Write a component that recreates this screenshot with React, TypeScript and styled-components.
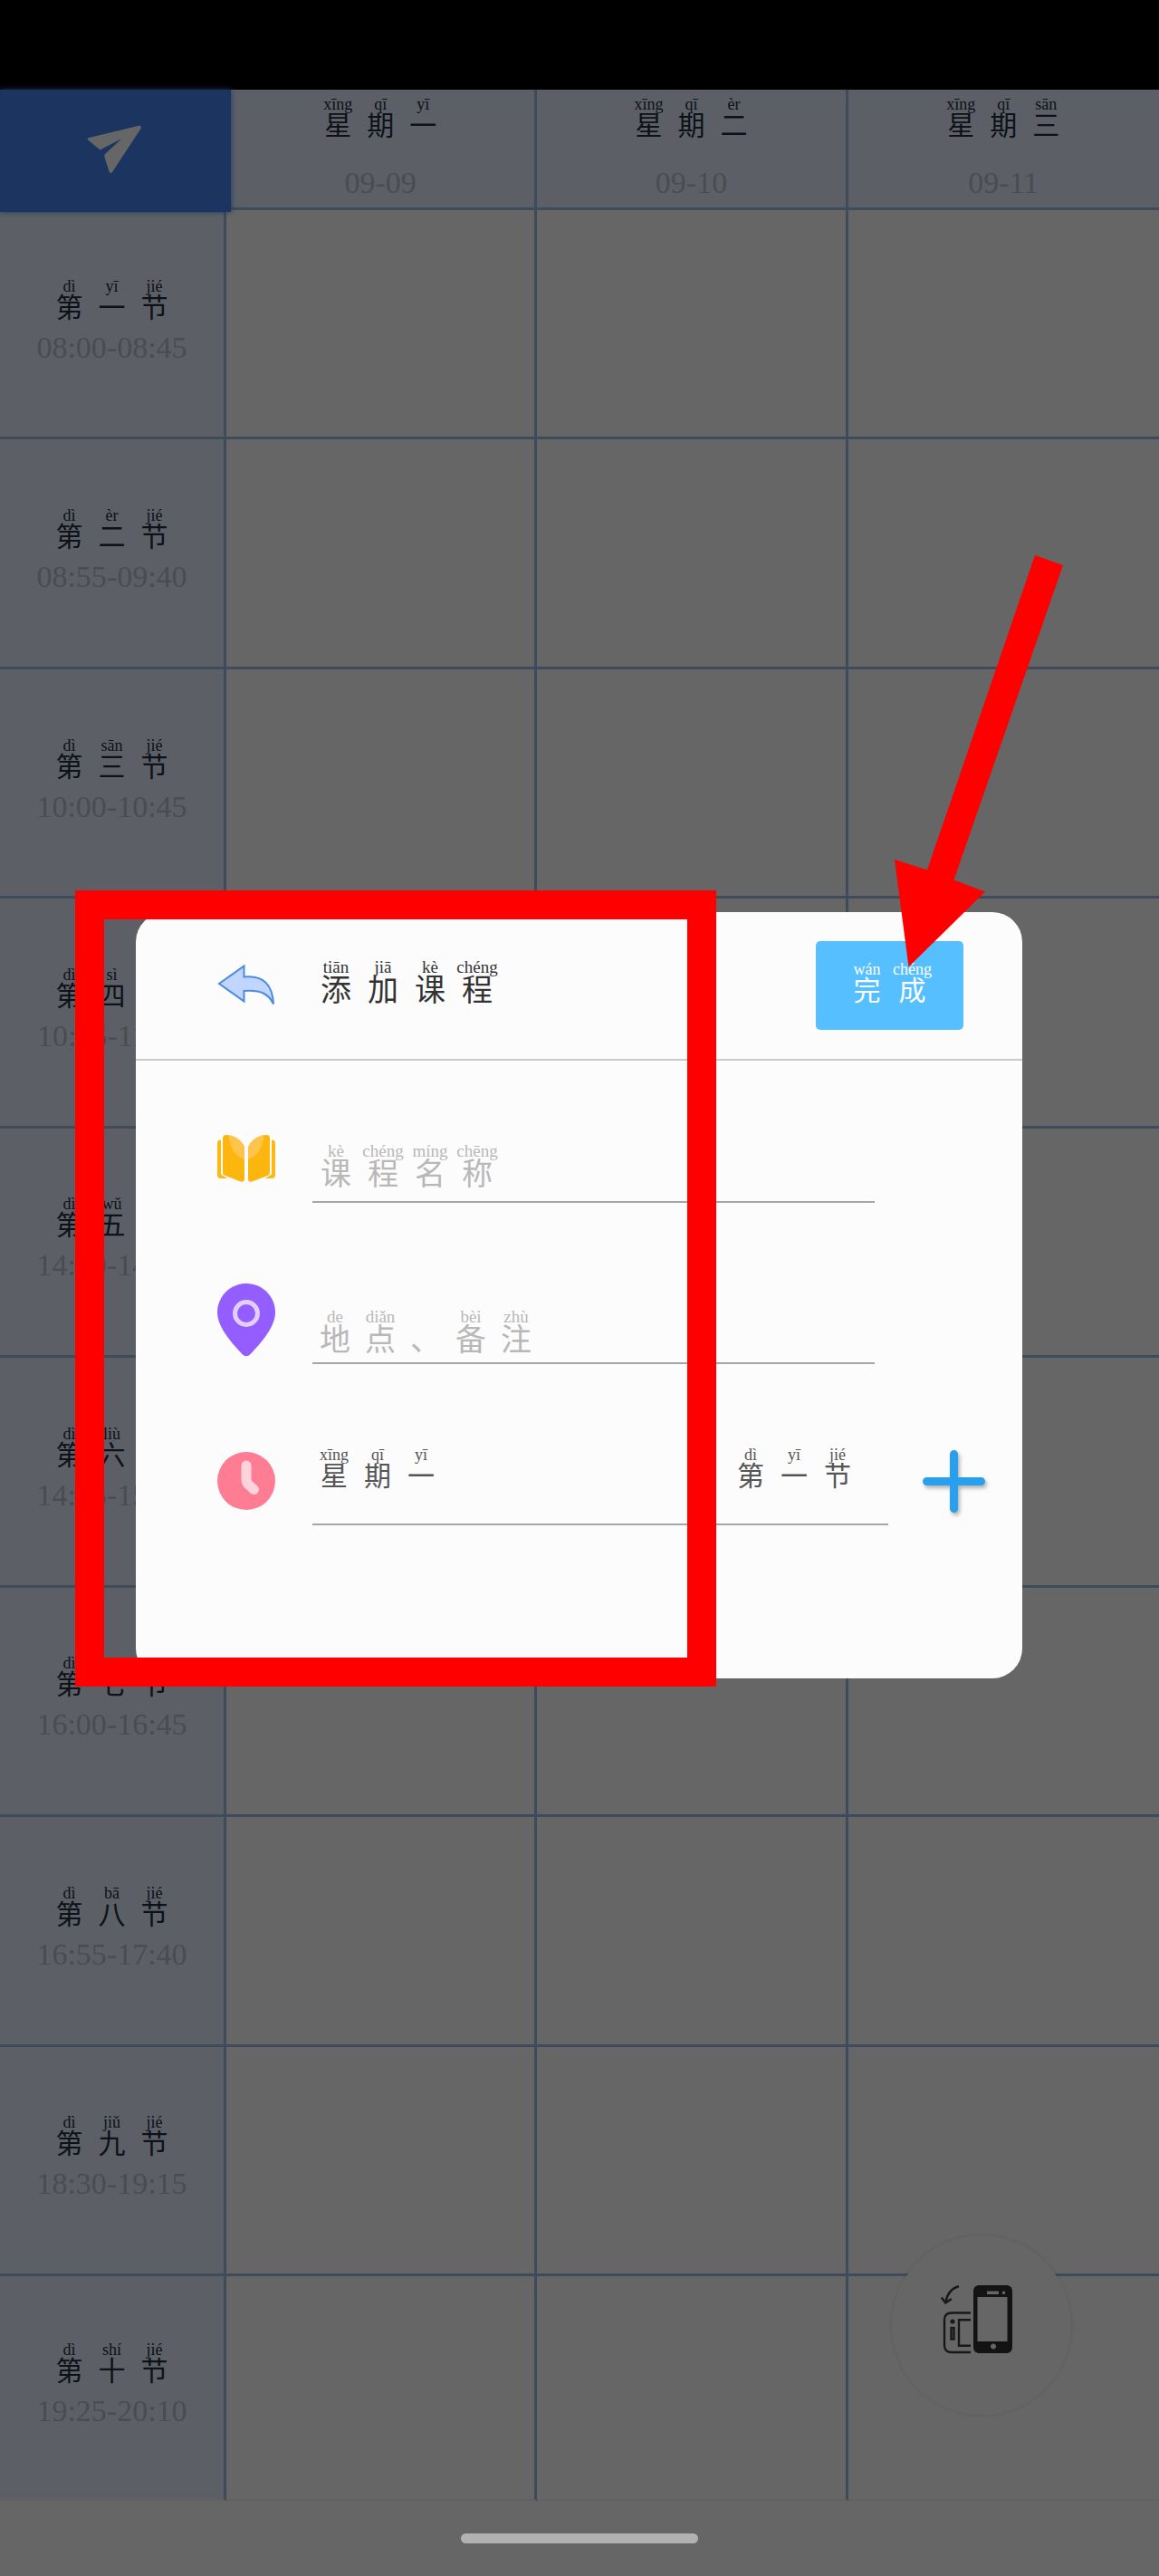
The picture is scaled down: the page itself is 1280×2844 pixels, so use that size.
import React from "react";
import styled, { createGlobalStyle } from "styled-components";

type Syllable = [hanzi: string, pinyin: string];

const GlobalStyle = createGlobalStyle`
  *, *::before, *::after { box-sizing: border-box; }
  body {
    margin: 0;
    background: #ffffff;
    font-family: "Liberation Serif", "Noto Sans CJK SC", serif;
  }
  button, input { font: inherit; color: inherit; }
`;

const Screen = styled.div`
  position: relative;
  display: flex;
  flex-direction: column;
  min-height: 100vh;
`;

const StatusBar = styled.div`
  flex: none;
  height: 99px;
  background: #000000;
`;

/* ---------- annotated Chinese text ---------- */

const Phrase = styled.span<{ $cell: number; $size: number; $note: number; $color: string }>`
  display: inline-flex;
  color: ${(p) => p.$color};

  ruby {
    display: flex;
    flex-direction: column-reverse;
    align-items: center;
    width: ${(p) => p.$cell}px;
    font-size: ${(p) => p.$size}px;
    font-weight: 400;
    line-height: ${(p) => p.$size}px;
    white-space: nowrap;
  }

  rt {
    display: block;
    height: ${(p) => p.$note}px;
    font-size: ${(p) => p.$note}px;
    font-weight: 400;
    line-height: ${(p) => p.$note}px;
  }
`;

function Pinyin({
  text,
  cell = 47,
  size = 30,
  note = 18,
  color = "#555555",
}: {
  text: Syllable[];
  cell?: number;
  size?: number;
  note?: number;
  color?: string;
}) {
  return (
    <Phrase $cell={cell} $size={size} $note={note} $color={color}>
      {text.map(([hanzi, pinyin], i) => (
        <ruby key={i}>
          {hanzi}
          <rt>{pinyin}</rt>
        </ruby>
      ))}
    </Phrase>
  );
}

/* ---------- timetable ---------- */

const line = "3px solid #98bbe1";

const Timetable = styled.table`
  flex: 1;
  display: grid;
  grid-template-columns: 250px repeat(3, 1fr);
  grid-template-rows: 133px repeat(9, 1fr) 248px;

  thead, tbody, tr { display: contents; }
  tbody tr:last-child > * { border-bottom: 2px solid #f2f2f2; }
`;

const Corner = styled.td`
  z-index: 1;
  margin: 0 -5px -2px 0;
  padding: 0;
  background: #4485f0;
  box-shadow: 0 0 6px #4485f0;
`;

const SendButton = styled.button`
  display: flex;
  align-items: center;
  justify-content: center;
  width: 100%;
  height: 100%;
  padding: 0 4px 4px 0;
  border: 0;
  background: none;
`;

const DayHead = styled.th`
  display: flex;
  flex-direction: column;
  align-items: center;
  gap: 28px;
  padding: 7px 0 0;
  border-right: ${line};
  border-bottom: ${line};
  background: #e6f0ff;
  &:last-child { border-right: 0; }
`;

const PeriodHead = styled.th`
  display: flex;
  flex-direction: column;
  align-items: center;
  justify-content: center;
  gap: 9px;
  padding: 0 0 4px;
  border-right: ${line};
  border-bottom: ${line};
  background: #e6f0ff;
`;

const Slot = styled.td`
  padding: 0;
  border-right: ${line};
  border-bottom: ${line};
  &:last-child { border-right: 0; }
`;

const Numbers = styled.span`
  color: #b6bdcb;
  font-size: 34px;
  font-weight: 400;
  line-height: 40px;
`;

const week: Syllable[] = [["星", "xīng"], ["期", "qī"]];
const days: { name: Syllable; date: string }[] = [
  { name: ["一", "yī"], date: "09-09" },
  { name: ["二", "èr"], date: "09-10" },
  { name: ["三", "sān"], date: "09-11" },
];

const periods: { name: Syllable; time: string }[] = [
  { name: ["一", "yī"], time: "08:00-08:45" },
  { name: ["二", "èr"], time: "08:55-09:40" },
  { name: ["三", "sān"], time: "10:00-10:45" },
  { name: ["四", "sì"], time: "10:55-11:40" },
  { name: ["五", "wǔ"], time: "14:00-14:45" },
  { name: ["六", "liù"], time: "14:55-15:40" },
  { name: ["七", "qī"], time: "16:00-16:45" },
  { name: ["八", "bā"], time: "16:55-17:40" },
  { name: ["九", "jiǔ"], time: "18:30-19:15" },
  { name: ["十", "shí"], time: "19:25-20:10" },
];

const period = (name: Syllable): Syllable[] => [["第", "dì"], name, ["节", "jié"]];

/* ---------- bottom area ---------- */

const Footer = styled.footer`
  flex: none;
  display: flex;
  justify-content: center;
  height: 83px;
  padding-top: 36px;
`;

const HomeIndicator = styled.div`
  z-index: 3;
  width: 262px;
  height: 11px;
  border-radius: 6px;
  background: #b2b2b2;
`;

const RotateButton = styled.button`
  position: absolute;
  right: 97px;
  bottom: 178px;
  z-index: 1;
  display: flex;
  align-items: center;
  justify-content: center;
  width: 198px;
  height: 198px;
  padding: 0 10px 12px 0;
  border: 0;
  border-radius: 50%;
  background: #ffffff;
  box-shadow: 0 0 5px rgba(0, 0, 0, 0.12);
`;

/* ---------- dialog ---------- */

const Backdrop = styled.div`
  position: absolute;
  inset: 0;
  z-index: 2;
  display: flex;
  align-items: center;
  padding: 99px 151px 83px 150px;
  background: rgba(0, 0, 0, 0.6);
`;

const Dialog = styled.section`
  flex: 1;
  border-radius: 33px;
  background: #fcfcfc;
`;

const DialogHeader = styled.header`
  display: flex;
  align-items: center;
  padding: 32px 65px 32px 90px;
  border-bottom: 2px solid #cacaca;
`;

const IconButton = styled.button`
  flex: none;
  display: flex;
  padding: 0;
  border: 0;
  background: none;
`;

const Title = styled.h1`
  flex: 1;
  display: flex;
  margin: 0;
  padding: 0 0 8px 41px;
`;

const DoneButton = styled.button`
  display: flex;
  align-items: center;
  justify-content: center;
  width: 163px;
  height: 98px;
  padding: 0 0 6px;
  border: 0;
  border-radius: 5px;
  background: #56bfff;
`;

const Form = styled.form`
  padding: 19px 0 129px;
`;

const FormRow = styled.div`
  display: flex;
  align-items: center;
  gap: 41px;
  height: 178px;
  padding: 0 41px 0 90px;

  > svg { flex: none; }
`;

const Field = styled.div<{ $lift: number }>`
  flex: 1;
  display: grid;
  align-items: end;
  height: 98px;
  margin-right: 122px;
  border-bottom: 2px solid #a6a6a6;

  > * { grid-area: 1 / 1; }
  label { padding-bottom: ${(p) => p.$lift}px; }
  input {
    width: 100%;
    height: 96px;
    padding: 0;
    border: 0;
    outline: 0;
    background: none;
    font-size: 30px;
  }
`;

const TimeField = styled.div`
  flex: 1;
  display: flex;
  align-items: flex-end;
  justify-content: space-between;
  height: 98px;
  margin-right: -3px;
  padding: 0 32px 37px 0;
  border-bottom: 2px solid #a6a6a6;
`;

const PickerButton = styled.button`
  display: flex;
  padding: 0;
  border: 0;
  background: none;
`;

/* ---------- guide marks ---------- */

const GuideFrame = styled.div`
  position: absolute;
  top: 983px;
  left: 83px;
  z-index: 4;
  width: 708px;
  height: 879px;
  border: 32px solid #ff0000;
  pointer-events: none;
`;

const GuideArrow = styled.svg`
  position: absolute;
  top: 613px;
  left: 988px;
  z-index: 4;
  pointer-events: none;
`;

/* ---------- icons ---------- */

const PlaneIcon = () => (
  <svg width="60" height="54" viewBox="0 0 60 54" aria-hidden="true">
    <path
      d="M57.5 0.8 1.6 14.2c-1 .3-1.2 1.4-.4 2.2L14.5 27.4 38.5 15 19.5 32.5v3.2l5.3 16.2c.6 1.4 2.2 1.4 3.2.2L59.3 4.2C60.400 2.200 59.600.4 57.500.8z"
      fill="#ffffff"
    />
  </svg>
);

const BackIcon = () => (
  <svg width="64" height="48" viewBox="0 0 64 48" aria-hidden="true">
    <path
      d="M29.500 2.500v12C51 12.500 61 23 62 44.500 57 34 49 28.500 29.500 30v11.500L2 22z"
      fill="#c0d5ff"
      stroke="#4a8ce0"
      strokeWidth="2"
      strokeLinejoin="miter"
    />
  </svg>
);

const BookHalf = () => (
  <>
    <path d="M4 5.500C1.500 5.500 0 6.500 0 9v35.500C0 47 1.500 48 4 48h7L4 43.500z" fill="#fdb813" />
    <path
      d="M10.500 0C7.500 0 6 1 6 3.500V41c0 2 .6 3 2.500 4L25 51.200c3 1 5 .3 5-2.700V13.500C27 6.500 20 1 10.500 0z"
      fill="#fdb60d"
    />
    <path d="M12.500.3C13.500 13 19 23 30 27V13.500C27 6.500 20 1 12.500.3z" fill="#fec44c" />
  </>
);

const BookIcon = () => (
  <svg width="64" height="52" viewBox="0 0 64 52" aria-hidden="true">
    <BookHalf />
    <g transform="translate(64 0) scale(-1 1)">
      <BookHalf />
    </g>
  </svg>
);

const PinIcon = () => (
  <svg width="64" height="80" viewBox="0 0 64 80" aria-hidden="true">
    <path
      d="M32 0C14.300 0 0 14.300 0 32c0 14 12 30 28 46.500 2.500 2.300 5.500 2.300 8 0C52 62 64 46 64 32 64 14.300 49.700 0 32 0z"
      fill="#945dff"
    />
    <circle cx="32" cy="33" r="12.500" fill="none" stroke="#e2cfff" strokeWidth="5" />
  </svg>
);

const ClockIcon = () => (
  <svg width="64" height="64" viewBox="0 0 64 64" aria-hidden="true">
    <circle cx="32" cy="32" r="32" fill="#ff7d93" />
    <path
      d="M32 15v16c0 2 .5 3 2 4.500l6.500 6"
      fill="none"
      stroke="#ffd3dc"
      strokeWidth="11"
      strokeLinecap="round"
      strokeLinejoin="round"
    />
  </svg>
);

const PlusDrawing = styled.svg`
  display: block;
  overflow: visible;
  filter: drop-shadow(2px 3px 2px rgba(0, 0, 0, 0.3));
`;

const PlusIcon = () => (
  <PlusDrawing width="69" height="69" viewBox="0 0 69 69" aria-hidden="true">
    <path d="M34.500 4.500v60M4.500 34.500h60" stroke="#28a0ee" strokeWidth="9" strokeLinecap="round" />
  </PlusDrawing>
);

const RotateIcon = () => (
  <svg width="80" height="76" viewBox="0 0 80 76" aria-hidden="true">
    <g fill="none" stroke="#3c3c3c" strokeWidth="2.400">
      <path d="M20 1C12 3.500 6.500 10 5.500 19M.8 13.500l4.500 6 6.500-4.500" />
      <path d="M33 30.500H12c-5.500 0-8 3-8 8v28c0 5 3 7.500 8 7.500h21" />
      <path d="M33 38.300H20v28.500h13" />
      <rect x="11.500" y="47" width="3" height="12.500" />
    </g>
    <circle cx="13" cy="40" r="2.600" fill="#3c3c3c" />
    <path
      fill="#303030"
      fillRule="evenodd"
      d="M43 0h29c4.500 0 7 2.500 7 7v61c0 4.500-2.500 7-7 7H43c-4.500 0-7-2.500-7-7V7c0-4.500 2.500-7 7-7zM40.500 13v49h33V13zM51 6.500v3.500h13V6.500zM58 64.500a3 3 0 1 0 .01 0zM69.500 6.500a1.800 1.800 0 1 0 .01 0z"
    />
  </svg>
);

/* ---------- page ---------- */

export default function App() {
  return (
    <Screen>
      <GlobalStyle />
      <StatusBar />

      <Timetable>
        <thead>
          <tr>
            <Corner>
              <SendButton type="button" aria-label="分享课程表">
                <PlaneIcon />
              </SendButton>
            </Corner>
            {days.map((day) => (
              <DayHead key={day.date} scope="col">
                <Pinyin text={[...week, day.name]} color="#222c3c" />
                <Numbers>{day.date}</Numbers>
              </DayHead>
            ))}
          </tr>
        </thead>
        <tbody>
          {periods.map((item) => (
            <tr key={item.time}>
              <PeriodHead scope="row">
                <Pinyin text={period(item.name)} color="#222c3c" />
                <Numbers>{item.time}</Numbers>
              </PeriodHead>
              {days.map((day) => (
                <Slot key={day.date} />
              ))}
            </tr>
          ))}
        </tbody>
      </Timetable>

      <Footer>
        <HomeIndicator />
      </Footer>

      <RotateButton type="button" aria-label="旋转屏幕">
        <RotateIcon />
      </RotateButton>

      <Backdrop>
        <Dialog role="dialog" aria-labelledby="dialog-title">
          <DialogHeader>
            <IconButton type="button" aria-label="返回">
              <BackIcon />
            </IconButton>
            <Title id="dialog-title">
              <Pinyin
                text={[["添", "tiān"], ["加", "jiā"], ["课", "kè"], ["程", "chéng"]]}
                cell={52}
                size={34}
                note={19}
                color="#333333"
              />
            </Title>
            <DoneButton type="submit" form="course">
              <Pinyin text={[["完", "wán"], ["成", "chéng"]]} cell={50} color="#ffffff" />
            </DoneButton>
          </DialogHeader>

          <Form id="course" onSubmit={(e) => e.preventDefault()}>
            <FormRow>
              <BookIcon />
              <Field $lift={12}>
                <label htmlFor="name">
                  <Pinyin
                    text={[["课", "kè"], ["程", "chéng"], ["名", "míng"], ["称", "chēng"]]}
                    cell={52}
                    size={34}
                    note={19}
                    color="#b8b8b8"
                  />
                </label>
                <input id="name" type="text" />
              </Field>
            </FormRow>
            <FormRow>
              <PinIcon />
              <Field $lift={7}>
                <label htmlFor="place">
                  <Pinyin
                    text={[["地", "de"], ["点", "diǎn"], ["、", ""], ["备", "bèi"], ["注", "zhù"]]}
                    cell={50}
                    size={34}
                    note={19}
                    color="#b8b8b8"
                  />
                </label>
                <input id="place" type="text" />
              </Field>
            </FormRow>
            <FormRow>
              <ClockIcon />
              <TimeField>
                <PickerButton type="button" aria-haspopup="listbox">
                  <Pinyin text={[...week, ["一", "yī"]]} cell={48} />
                </PickerButton>
                <PickerButton type="button" aria-haspopup="listbox">
                  <Pinyin text={period(["一", "yī"])} cell={48} />
                </PickerButton>
              </TimeField>
              <IconButton type="button" aria-label="添加时间">
                <PlusIcon />
              </IconButton>
            </FormRow>
          </Form>
        </Dialog>
      </Backdrop>

      <GuideFrame />
      <GuideArrow width="186" height="455" viewBox="0 0 186 455" aria-hidden="true">
        <path d="M155 0 186 11 65.500 358.500 100 371.500 15.500 454.500 0 336 36 347.500z" fill="#ff0000" />
      </GuideArrow>
    </Screen>
  );
}
